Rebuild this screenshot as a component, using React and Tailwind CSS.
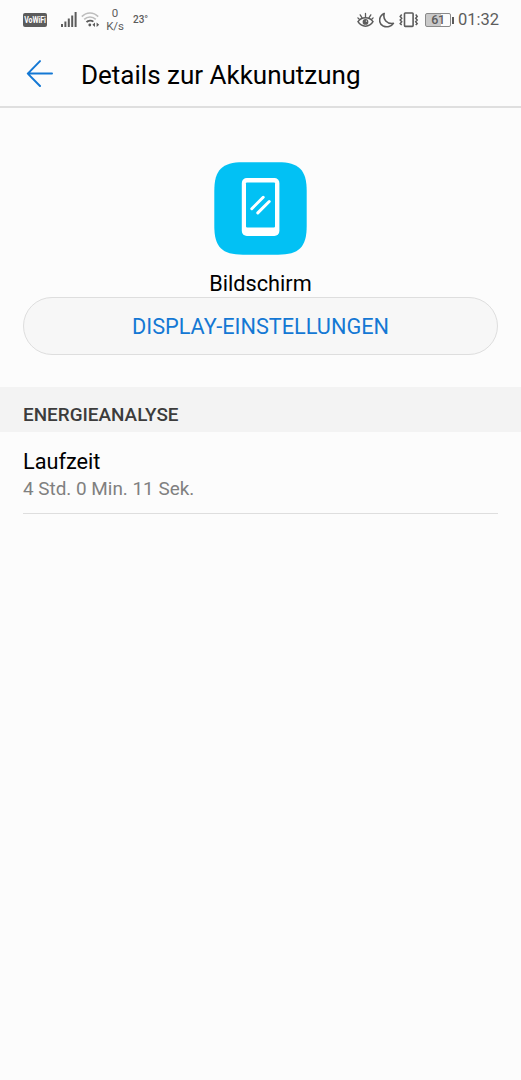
import React from "react";

const SignalIcon = () => (
  <svg width="16" height="16" viewBox="0 0 16 16" fill="#5c5c5c">
    <rect x="0" y="12" width="2" height="3" />
    <rect x="3.4" y="9.5" width="2" height="5.5" />
    <rect x="6.8" y="6.5" width="2" height="8.5" />
    <rect x="10.2" y="3.5" width="2" height="11.5" />
    <rect x="13.6" y="0" width="2" height="15" />
  </svg>
);

const WifiIcon = () => (
  <svg width="19" height="16" viewBox="0 0 19 16" fill="none">
    <path d="M0.8 4.6C5.5 -0.2 12.5 -0.2 17.2 4.6" stroke="#bdbdbd" strokeWidth="1.6" />
    <path d="M3.2 7.4C6.5 4.1 11.5 4.1 14.8 7.4" stroke="#bdbdbd" strokeWidth="1.6" />
    <path d="M5.5 10.2C7.3 8.1 10.5 8.1 12.4 9.6" stroke="#5c5c5c" strokeWidth="1.8" />
    <circle cx="8.8" cy="13" r="1.4" fill="#5c5c5c" />
    <path d="M14 10.6V15L11.4 12.8ZM15.6 10.6V15L18.2 12.8Z" fill="#5c5c5c" />
  </svg>
);

const EyeIcon = () => (
  <svg width="18" height="17" viewBox="0 0 18 17" fill="none" stroke="#5c5c5c" strokeLinecap="round">
    <path d="M1 9.7C4.5 4.4 12.5 4.4 16 9.7C12.5 15.6 4.5 15.6 1 9.7Z" strokeWidth="1.5" />
    <circle cx="8.5" cy="9.9" r="2.9" fill="#5c5c5c" stroke="none" />
    <circle cx="9.4" cy="9.1" r="0.7" fill="#fcfcfc" stroke="none" />
    <path d="M8.5 1.4V5M3.2 2.9L4.9 5.6M13.8 2.9L12.1 5.6M0.9 5.9L2.3 7.3M16.1 5.9L14.7 7.3" strokeWidth="1.3" />
  </svg>
);

const MoonIcon = () => (
  <svg width="17" height="17" viewBox="0 0 17 17" fill="none">
    <path
      d="M5.2 1.4C-0.6 4 -0.8 11.5 4.2 14C8.1 15.8 12.6 14.4 14.4 11.4C7.9 12.2 3.6 7.6 5.2 1.4Z"
      stroke="#5c5c5c"
      strokeWidth="1.6"
      strokeLinejoin="round"
    />
  </svg>
);

const VibrateIcon = () => (
  <svg width="20" height="16" viewBox="0 0 20 16" fill="none" stroke="#5c5c5c">
    <rect x="5.5" y="1" width="8.6" height="13.4" rx="0.8" strokeWidth="1.6" />
    <path d="M2.7 2.6L1.2 4.4L2.7 6.2L1.2 8L2.7 9.8L1.2 11.6L2.7 13" strokeWidth="1.5" />
    <path d="M16.7 2.6L18.2 4.4L16.7 6.2L18.2 8L16.7 9.8L18.2 11.6L16.7 13" strokeWidth="1.5" />
  </svg>
);

const BackIcon = () => (
  <svg width="28" height="28" viewBox="0 0 28 28" fill="none">
    <path
      d="M14 2.1L1.8 14.6L14 27M1.8 14.6H26"
      stroke="#1478d4"
      strokeWidth="2"
      strokeLinecap="round"
      strokeLinejoin="round"
    />
  </svg>
);

const ScreenIcon = () => (
  <svg width="93" height="93" viewBox="0 0 93 93" fill="none">
    <path
      d="M0.3 29C0.3 8 8 0.3 29 0.3H64C85 0.3 92.7 8 92.7 29V64C92.7 85 85 92.7 64 92.7H29C8 92.7 0.3 85 0.3 64Z"
      fill="#02c1f4"
    />
    <rect x="27.8" y="16" width="37.6" height="58" rx="5" fill="#fff" />
    <rect x="32" y="20.4" width="29" height="45" rx="0.8" fill="#02c1f4" />
    <path d="M37.8 46.7L49.2 35.3M43.8 50.9L55.2 39.5" stroke="#fff" strokeWidth="3" strokeLinecap="round" />
  </svg>
);

const StatusBar = () => {
  return (
    <div className="flex h-10 items-center justify-between pr-[22px] pl-[23px] text-[#5c5c5c]">
      <div className="flex items-center">
        <div className="flex h-[14px] w-6 items-center justify-center rounded-[2px] bg-[#5c5c5c] text-white">
          <span className="scale-y-[1.35] text-[7px] leading-none font-bold tracking-[-0.1px]">VoWiFi</span>
        </div>
        <div className="ml-[14px]">
          <SignalIcon />
        </div>
        <div className="ml-1">
          <WifiIcon />
        </div>
        <div className="ml-[7px] flex w-4 flex-col items-center text-[11.5px] leading-[13px] tracking-[-0.2px] whitespace-nowrap">
          <span>0</span>
          <span>K/s</span>
        </div>
        <span className="ml-[10px] text-[10px] leading-none font-medium">23°</span>
      </div>
      <div className="flex items-center">
        <EyeIcon />
        <div className="ml-1">
          <MoonIcon />
        </div>
        <div className="ml-[3px]">
          <VibrateIcon />
        </div>
        <div className="ml-[6px] flex items-center gap-px">
          <div className="flex h-[14px] w-[26px] rounded-[2px] border border-[#8a8a8a] bg-[linear-gradient(90deg,#c9c9c9_61%,#fcfcfc_61%)]">
            <span className="w-full pr-px text-center text-[12.5px] leading-[12px] font-medium tracking-[-0.5px]">61</span>
          </div>
          <div className="h-[7px] w-[1.5px] bg-[#5c5c5c]" />
        </div>
        <span className="ml-[4px] text-[16.5px] leading-none">01:32</span>
      </div>
    </div>
  );
};

const App = () => {
  return (
    <div className="flex min-h-screen w-full flex-col bg-[#fcfcfc] font-['Roboto',sans-serif] text-black">
      <StatusBar />
      <header className="flex h-[68px] items-center border-b-[2px] border-[#dfdfdf] pl-[26px]">
        <BackIcon />
        <h1 className="ml-[27px] pt-[3px] text-[26px] leading-8 whitespace-nowrap">
          Details zur Akkunutzung
        </h1>
      </header>

      <main>
        <div className="flex flex-col items-center px-[23px] pt-[54px]">
          <ScreenIcon />
          <p className="mt-[15px] text-[21.7px] leading-[27px]">Bildschirm</p>
          <button className="h-[58px] w-full rounded-full border border-[#dedede] bg-[#f7f7f7] pt-[2px] text-[21.7px] text-[#1478d4]">
            DISPLAY-EINSTELLUNGEN
          </button>
        </div>

        <h2 className="mt-8 h-[45px] bg-[#f3f3f3] pt-4 pl-[23px] text-[18.9px] leading-6 font-medium text-[#3c3c3c]">
          ENERGIEANALYSE
        </h2>

        <div className="mx-[23px] h-[82px] border-b border-[#dedede] pt-4">
          <p className="text-[21.7px] leading-7">Laufzeit</p>
          <p className="text-[18.9px] leading-[26px] text-[#808080]">4 Std. 0 Min. 11 Sek.</p>
        </div>
      </main>
    </div>
  );
};

export default App;
